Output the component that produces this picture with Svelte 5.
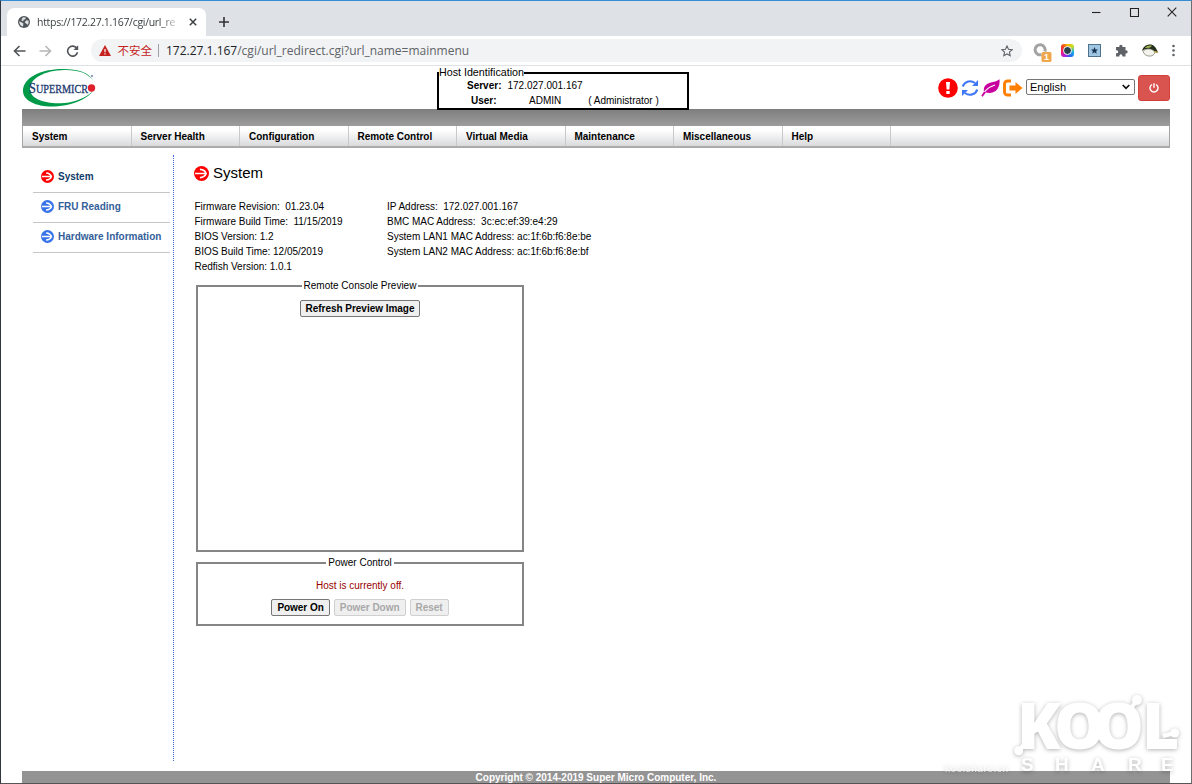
<script lang="ts">
  const menu = [
    'System',
    'Server Health',
    'Configuration',
    'Remote Control',
    'Virtual Media',
    'Maintenance',
    'Miscellaneous',
    'Help'
  ];

  const links = ['System', 'FRU Reading', 'Hardware Information'];
  let current = $state('System');

  const firmware = [
    ['Firmware Revision:', '\u00a001.23.04'],
    ['Firmware Build Time:', '\u00a011/15/2019'],
    ['BIOS Version:', '1.2'],
    ['BIOS Build Time:', '12/05/2019'],
    ['Redfish Version:', '1.0.1']
  ];

  const network = [
    ['IP Address:', '\u00a0172.027.001.167'],
    ['BMC MAC Address:', '\u00a03c:ec:ef:39:e4:29'],
    ['System LAN1 MAC Address:', 'ac:1f:6b:f6:8e:be'],
    ['System LAN2 MAC Address:', 'ac:1f:6b:f6:8e:bf']
  ];
</script>

{#snippet arrow()}
  <svg class="arrow" viewBox="0 0 14 14">
    <circle cx="7" cy="7" r="7" fill="currentColor" />
    <path d="M1 7h10M5.500 3.200C8.500 3.400 10.600 5 11.300 7 10.600 9 8.500 10.600 5.500 10.800" fill="none" stroke="#fff" stroke-width="1.600" />
  </svg>
{/snippet}

<div class="window">
  <div class="tabstrip">
    <div class="tab">
      <svg class="globe" viewBox="0 0 12 12">
        <circle cx="6" cy="6" r="6" fill="#50555a" />
        <path d="M1.200 5.200 3.500 6.200 5.400 7.400 5 10.600C2.900 10.200 1.300 8.400 1.200 5.200zM5 1.300l2.800.2-.5 1.700-1.700.6-.4 1.400-1.700-.5.3-1.800zM8.300 4.200l2.300.5c.3 1.500-.1 3-1 4L8 7.400 6.700 6.200z" fill="#dfe2e5" />
      </svg>
      <span class="tab-title">https://172.27.1.167/cgi/url_re</span>
      <svg class="tab-close" viewBox="0 0 8 8"><path d="M.8.8 7.200 7.200M7.200.8.8 7.200" /></svg>
    </div>
    <svg class="new-tab" viewBox="0 0 10 10"><path d="M5 0v10M0 5h10" /></svg>
    <div class="controls">
      <svg viewBox="0 0 10 10"><path d="M1 5.500h8.500" /></svg>
      <svg viewBox="0 0 10 10"><path d="M1.500 1.500h8v8h-8z" /></svg>
      <svg viewBox="0 0 10 10"><path d="M.7.700 9.300 9.300M9.300.7.700 9.300" /></svg>
    </div>
  </div>

  <div class="toolbar">
    <svg class="nav" viewBox="0 0 13 12"><path d="M12.500 6H1.500M6.500 1 1.500 6l5 5" /></svg>
    <svg class="nav off" viewBox="0 0 13 12"><path d="M.5 6h11M6.500 1l5 5-5 5" /></svg>
    <svg class="nav" viewBox="0 0 13 12"><path d="M10.800 3.300A5 5 0 1 0 11.500 7.300" /><path d="M12.200.3v4.700H7.500z" class="solid" /></svg>
    <div class="omnibox">
      <svg class="warn" viewBox="0 0 12 11"><path d="M6 0l6 11H0z" fill="#c5221f" /><path d="M6 4v3.200M6 8.200v1.300" stroke="#fff" stroke-width="1.200" /></svg>
      <span class="insecure">不安全</span>
      <span class="sep"></span>
      <span class="url"><b>172.27.1.167</b>/cgi/url_redirect.cgi?url_name=mainmenu</span>
      <svg class="star" viewBox="0 0 12 12"><path d="M6 1l1.500 3.300 3.600.4-2.700 2.400.8 3.600L6 8.900l-3.200 1.800.8-3.600L.9 4.700l3.600-.4z" /></svg>
    </div>
    <div class="extensions">
      <svg width="19" height="19" viewBox="0 0 19 19">
        <path d="M8.500 11.600A5 5 0 1 1 11.800 8.500" fill="none" stroke="#a3a3a3" stroke-width="3" />
        <rect x="8.500" y="9" width="10" height="10" rx="1.500" fill="#f0a64a" />
        <text x="13.500" y="17.300" text-anchor="middle" font-size="9" font-weight="bold" fill="#fff">1</text>
      </svg>
      <span class="rainbow"><i></i></span>
      <svg width="13" height="13" viewBox="0 0 13 13">
        <rect x=".5" y=".5" width="12" height="12" fill="#9fc7e4" stroke="#4f718a" />
        <path d="M6.500 3l1 2.400 2.500.2-1.900 1.600.6 2.500-2.200-1.400-2.200 1.400.6-2.500L3 5.600l2.500-.2z" fill="#17354f" />
      </svg>
      <svg width="13" height="13" viewBox="0 0 13 13">
        <path d="M1 3h3.300V2.300a1.600 1.600 0 0 1 3.200 0V3H10.500v3.200h.6a1.600 1.600 0 0 1 0 3.200h-.6V12.500H7.400v-.8a1.500 1.500 0 0 0-3 0v.8H1V9.300h.7a1.500 1.500 0 0 0 0-3H1z" fill="#5f6368" />
      </svg>
      <svg width="16" height="13" viewBox="0 0 16 13">
        <path d="M0 7C1 2.500 4.500.5 8 .5s6 2.500 8 8l-3.500-.7C9 4 4 4 0 7z" fill="#24301c" />
        <path d="M3 4C5 1.500 8 1 10 2L7.500 3.700z" fill="#a8b455" />
        <path d="M1 7.500C4 4 10 4 13 8.200 12 13.500 3 13.500 1 7.500z" fill="#f4f4ed" stroke="#69705b" stroke-width=".7" />
        <path d="M12.500 7.500l3 1" stroke="#b4a23c" stroke-width="1.500" />
      </svg>
      <svg width="3" height="13" viewBox="0 0 3 13"><g fill="#5f6368"><circle cx="1.500" cy="2" r="1.300" /><circle cx="1.500" cy="6.500" r="1.300" /><circle cx="1.500" cy="11" r="1.300" /></g></svg>
    </div>
  </div>

  <div class="page">
    <header>
      <svg class="logo" width="76" height="40" viewBox="0 0 76 40">
        <path fill-rule="evenodd" fill="#009a49" d="M71 12.500C67 4.500 56 1 41 1 18 1 1 10 1 23c0 10 14 16 31 15.500 21-.7 39-10 40.500-20C71 27 56 34.500 39 35.200 23 35.800 8.500 31 8 21.500 7.500 10 23 2.300 42 1.900 56 1.600 66 5 71 12.500z" />
        <text x="7" y="25" textLength="59" lengthAdjust="spacingAndGlyphs" fill="#1b3a70" stroke="#1b3a70" stroke-width=".3"><tspan font-size="14">S</tspan><tspan font-size="11.500">UPERMICR</tspan></text>
        <circle cx="69.500" cy="20" r="3.700" fill="#e0212c" />
        <circle cx="70" cy="8" r="1.100" fill="#7587a8" />
      </svg>

      <fieldset class="host">
        <legend>Host Identification</legend>
        <div class="host-row"><b>Server:</b><span>172.027.001.167</span></div>
        <div class="host-row user"><b>User:</b><span>ADMIN</span><span>( Administrator )</span></div>
      </fieldset>

      <div class="tools">
        <svg width="20" height="20" viewBox="0 0 20 20">
          <circle cx="10" cy="10" r="9.800" fill="#f00" />
          <path d="M8 4h4l-.6 7.500H8.600zM8.300 13h3.400v3H8.300z" fill="#fff" />
        </svg>
        <svg width="18" height="18" viewBox="0 0 18 18">
          <path d="M1.800 7.500C3 3 9 .2 14 4M16.200 10.500C15 15 9 17.800 4 14" fill="none" stroke="#3f78f5" stroke-width="2.100" />
          <path d="M17 1v6h-6zM1 17v-6h6z" fill="#3f78f5" />
        </svg>
        <svg width="19" height="18" viewBox="0 0 19 18">
          <path d="M18.500.3c.6 6-1.600 11.500-7 13.200-2.600.8-5 .2-6.700 0L1.700 17.700.3 16.800 3 12.500C2 8 5 4.800 9 3.800 13 2.800 16 2.500 18.500.3z" fill="#c8009d" />
          <path d="M3.500 12.800C7 8.500 10 7.200 14 6" fill="none" stroke="#fff" stroke-width="1.100" />
        </svg>
        <svg width="20" height="18" viewBox="0 0 20 18">
          <path d="M8 2H4.500A3 3 0 0 0 1.500 5v8a3 3 0 0 0 3 3H8" fill="none" stroke="#ff7f00" stroke-width="2.900" />
          <path d="M6.500 6.500h6V3l7 6-7 6v-3.500h-6z" fill="#ff7f00" />
        </svg>
        <div class="language">English<svg width="8" height="6" viewBox="0 0 8 6"><path d="M.7 1 4 4.400 7.300 1" fill="none" stroke="#111" stroke-width="1.700" /></svg></div>
        <button class="power" aria-label="Power">
          <svg width="10" height="10" viewBox="0 0 10 10"><path d="M3 1.500a4 4 0 1 0 4 0M5 .3v4.500" fill="none" stroke="#fff" stroke-width="1.400" /></svg>
        </button>
      </div>
    </header>

    <div class="band"></div>
    <nav class="menu">
      {#each menu as item}
        <a href="#top">{item}</a>
      {/each}
    </nav>

    <div class="body">
      <aside>
        {#each links as link}
          <button class="link" class:active={current === link} onclick={() => (current = link)}>
            {@render arrow()}{link}
          </button>
        {/each}
      </aside>

      <main>
        <h1>{@render arrow()}System</h1>
        <div class="info">
          <div>
            {#each firmware as [label, value]}
              <p>{label} {value}</p>
            {/each}
          </div>
          <div>
            {#each network as [label, value]}
              <p>{label} {value}</p>
            {/each}
          </div>
        </div>

        <fieldset class="panel preview">
          <legend>Remote Console Preview</legend>
          <button>Refresh Preview Image</button>
        </fieldset>

        <fieldset class="panel control">
          <legend>Power Control</legend>
          <p class="status">Host is currently off.</p>
          <div class="buttons">
            <button>Power On</button>
            <button disabled>Power Down</button>
            <button disabled>Reset</button>
          </div>
        </fieldset>
      </main>
    </div>

    <footer>Copyright © 2014-2019 Super Micro Computer, Inc.</footer>
  </div>

  <svg class="watermark" width="250" height="90" viewBox="0 0 250 90">
    <g fill="#fff">
      <text class="kool" y="48" x="70 107 146 195">KOOL</text>
      <path d="M72 49l8-9M184 7l6-8M216 35l12-3" stroke="#fff" stroke-width="4" />
      <circle cx="71.700" cy="49.700" r="4.500" />
      <circle cx="190" cy="-1" r="5" />
      <circle cx="227.700" cy="32" r="4.500" />
      <text class="share" y="70" x="74 108 144 181 214">SHARE</text>
      <text class="site" x="-2" y="71" textLength="63">koolshare.cn</text>
    </g>
  </svg>
</div>

<style>
  :global(body) {
    background: #fff;
  }

  .window {
    position: relative;
    display: flex;
    flex-direction: column;
    box-sizing: border-box;
    width: 1192px;
    height: 784px;
    overflow: hidden;
    border: 1px solid #6e6e6e;
    border-top-color: #348cd4;
    border-left-color: #303540;
    border-bottom-color: #555;
    background: #fff;
    font-family: 'Liberation Sans', Arial, sans-serif;
    font-size: 10px;
    color: #000;
  }

  svg {
    display: block;
    flex: none;
  }

  .tabstrip {
    display: flex;
    align-items: center;
    height: 35px;
    background: #dee1e6;
    font-family: 'Open Sans', sans-serif;
  }

  .tab {
    display: flex;
    align-items: center;
    align-self: flex-end;
    box-sizing: border-box;
    width: 199px;
    height: 28px;
    margin-left: 6px;
    padding: 0 9px 0 11px;
    border-radius: 7px 7px 0 0;
    background: #fff;
  }

  .globe {
    width: 12px;
    height: 12px;
    margin-right: 7px;
  }

  .tab-title {
    width: 144px;
    white-space: nowrap;
    font-size: 10.5px;
    letter-spacing: -0.3px;
    color: #3c4043;
    mask-image: linear-gradient(90deg, #000 86%, transparent);
  }

  .tab-close {
    width: 8px;
    height: 8px;
    margin-left: 8px;
    stroke: #3c4043;
    stroke-width: 1.5;
  }

  .new-tab {
    width: 10px;
    height: 10px;
    margin: 6px 0 0 13px;
    stroke: #303236;
    stroke-width: 1.6;
  }

  .controls {
    display: flex;
    gap: 28px;
    margin: -13px 14px 0 auto;
  }

  .controls svg {
    width: 10px;
    height: 10px;
    fill: none;
    stroke: #222;
    stroke-width: 1.1;
  }

  .toolbar {
    display: flex;
    align-items: center;
    box-sizing: border-box;
    height: 30px;
    padding: 0 16px 0 11.5px;
    border-bottom: 1px solid #dfe1e4;
  }

  .nav {
    width: 13px;
    height: 12px;
    margin-right: 13.5px;
    fill: none;
    stroke: #505357;
    stroke-width: 1.6;
  }

  .nav.off {
    stroke: #b5b7b9;
  }

  .nav .solid {
    fill: #505357;
    stroke: none;
  }

  .omnibox {
    display: flex;
    align-items: center;
    box-sizing: border-box;
    width: 931px;
    height: 23px;
    margin-left: -1.5px;
    padding: 0 9px 0 8px;
    border-radius: 12px;
    background: #f1f3f4;
    font-family: 'Open Sans', 'Noto Sans CJK SC', sans-serif;
  }

  .warn {
    width: 12px;
    height: 11px;
    margin-right: 7px;
  }

  .insecure {
    margin-top: -2px;
    font-family: 'Noto Sans CJK SC', sans-serif;
    font-size: 11.5px;
    color: #c5221f;
  }

  .sep {
    width: 1px;
    height: 13px;
    margin: 0 7px 0 6px;
    background: #9aa0a6;
  }

  .url {
    font-size: 12px;
    white-space: nowrap;
    color: #5f6368;
  }

  .url b {
    font-weight: normal;
    color: #202124;
  }

  .star {
    width: 12px;
    height: 12px;
    margin-left: auto;
    fill: none;
    stroke: #5f6368;
    stroke-width: 1.1;
  }

  .extensions {
    display: flex;
    flex: 1;
    align-items: center;
    justify-content: space-between;
    margin-left: 11px;
  }

  .extensions > svg:first-child {
    margin: 4px -5px 0 0;
  }

  .rainbow {
    display: grid;
    place-items: center;
    width: 13px;
    height: 13px;
    border-radius: 3px;
    background: conic-gradient(#f5b800, #c8dc20, #16b8e8, #2864f0, #b01ee0, #f01878, #f04020, #f5b800);
  }

  .rainbow i {
    width: 7px;
    height: 7px;
    border: 1.5px solid #fff;
    border-radius: 50%;
    background: #27404d;
  }

  .page {
    display: flex;
    flex: 1;
    flex-direction: column;
    padding: 0 21px;
  }

  header {
    display: flex;
    height: 43px;
  }

  .logo {
    margin-top: 2px;
    font-family: 'Liberation Serif', serif;
  }

  fieldset {
    box-sizing: border-box;
    margin: 0;
    min-width: 0;
  }

  .host {
    position: relative;
    width: 252px;
    height: 43px;
    margin: 1px 0 0 339px;
    padding: 0;
    border: 2px solid #000;
  }

  .host legend {
    height: 12px;
    padding: 0;
    font-size: 10.7px;
    line-height: 11px;
  }

  .host-row {
    display: flex;
    height: 15px;
    margin-left: 28px;
    line-height: 14px;
  }

  .host-row b {
    width: 40.5px;
  }

  .host-row.user {
    margin-left: 32px;
  }

  .user b {
    width: 58px;
  }

  .user span + span {
    margin-left: 27px;
  }

  .tools {
    display: flex;
    align-items: center;
    margin-left: auto;
    gap: 3px;
  }

  .tools > svg {
    margin-left: -0.3px;
  }

  .language {
    display: flex;
    align-items: center;
    justify-content: space-between;
    box-sizing: border-box;
    width: 109px;
    height: 16px;
    margin-top: -1px;
    padding: 0 4px 0 3px;
    border: 1px solid #767676;
    border-radius: 2px;
    font-size: 11px;
    line-height: 14px;
  }

  .power {
    display: grid;
    place-items: center;
    width: 32px;
    height: 26px;
    padding: 0;
    border: 1px solid #d43f3a;
    border-radius: 3px;
    background: #d9534f;
  }

  .band {
    flex: none;
    height: 17px;
    background: linear-gradient(#7e7e7e, #9d9d9d);
  }

  .menu {
    display: flex;
    flex: none;
    box-sizing: border-box;
    height: 22px;
    border: 1px solid #a5a5a5;
    border-top: 0;
    border-bottom: 2px solid #ababab;
    background: linear-gradient(#fff 20%, #d9dadc);
  }

  .menu a {
    box-sizing: border-box;
    width: 108.5px;
    padding-left: 9px;
    border-right: 1px solid #c9c9c9;
    font-weight: bold;
    line-height: 22px;
    letter-spacing: -0.02px;
    color: #000;
    text-decoration: none;
  }

  .body {
    display: flex;
    flex: 1;
    margin: 7px 0 10px;
  }

  aside {
    box-sizing: border-box;
    width: 152px;
    padding: 8px 3px 0 11px;
    border-right: 1px dotted #4169e1;
  }

  .link {
    display: flex;
    align-items: center;
    box-sizing: border-box;
    width: 137px;
    height: 30px;
    padding: 0 0 2px 8px;
    border: 0;
    border-bottom: 1px solid #c6c6c6;
    background: none;
    font: bold 10px 'Liberation Sans', Arial, sans-serif;
    color: #34609a;
  }

  .arrow {
    width: 13px;
    height: 13px;
    margin-right: 4px;
    color: #3672e8;
  }

  .link.active {
    color: #103c68;
  }

  .active .arrow,
  h1 .arrow {
    color: #f00;
  }

  main {
    padding: 9px 0 0 20px;
  }

  h1 {
    display: flex;
    align-items: center;
    height: 18px;
    margin: 0;
    font-size: 15px;
    font-weight: normal;
    line-height: 16px;
  }

  h1 .arrow {
    width: 15px;
    height: 15px;
  }

  .info {
    display: grid;
    grid-template-columns: 192.5px auto;
    height: 75px;
    margin: 17px 0 0 0.5px;
    letter-spacing: -0.02px;
  }

  p {
    margin: 0;
    line-height: 15px;
  }

  .panel {
    width: 328px;
    margin-left: 2px;
    padding: 0;
    border: 2px solid #858585;
    text-align: center;
  }

  .panel legend {
    margin: 0 auto;
    padding: 0 2px;
    line-height: 12px;
  }

  .preview {
    height: 272px;
    margin-top: 6px;
  }

  .preview button {
    margin-top: 8px;
  }

  .panel button {
    height: 17px;
    padding: 0 5px;
    border: 1px solid #767676;
    border-radius: 2px;
    background: #efefef;
    font: bold 10px 'Liberation Sans', Arial, sans-serif;
    letter-spacing: -0.03px;
    color: #000;
  }

  .panel button:disabled {
    border-color: #d0d0d0;
    color: #a8a8a8;
  }

  .control {
    height: 69px;
    margin-top: 5px;
  }

  .status {
    margin-top: 9px;
    color: #990000;
  }

  .buttons {
    display: flex;
    justify-content: center;
    gap: 4px;
    margin-top: 6px;
  }

  footer {
    height: 12px;
    background: #949494;
    font-weight: bold;
    line-height: 13px;
    text-align: center;
    color: #fff;
  }

  .watermark {
    position: absolute;
    right: -6px;
    bottom: -8px;
    overflow: visible;
    filter: drop-shadow(0 1px 2px rgba(0, 0, 0, 0.3));
  }

  .kool {
    font: 800 64px 'Open Sans', sans-serif;
  }

  .share {
    font: bold 19px 'Liberation Sans', sans-serif;
  }

  .site {
    font: 10px 'Liberation Sans', sans-serif;
    opacity: 0.7;
  }
</style>
